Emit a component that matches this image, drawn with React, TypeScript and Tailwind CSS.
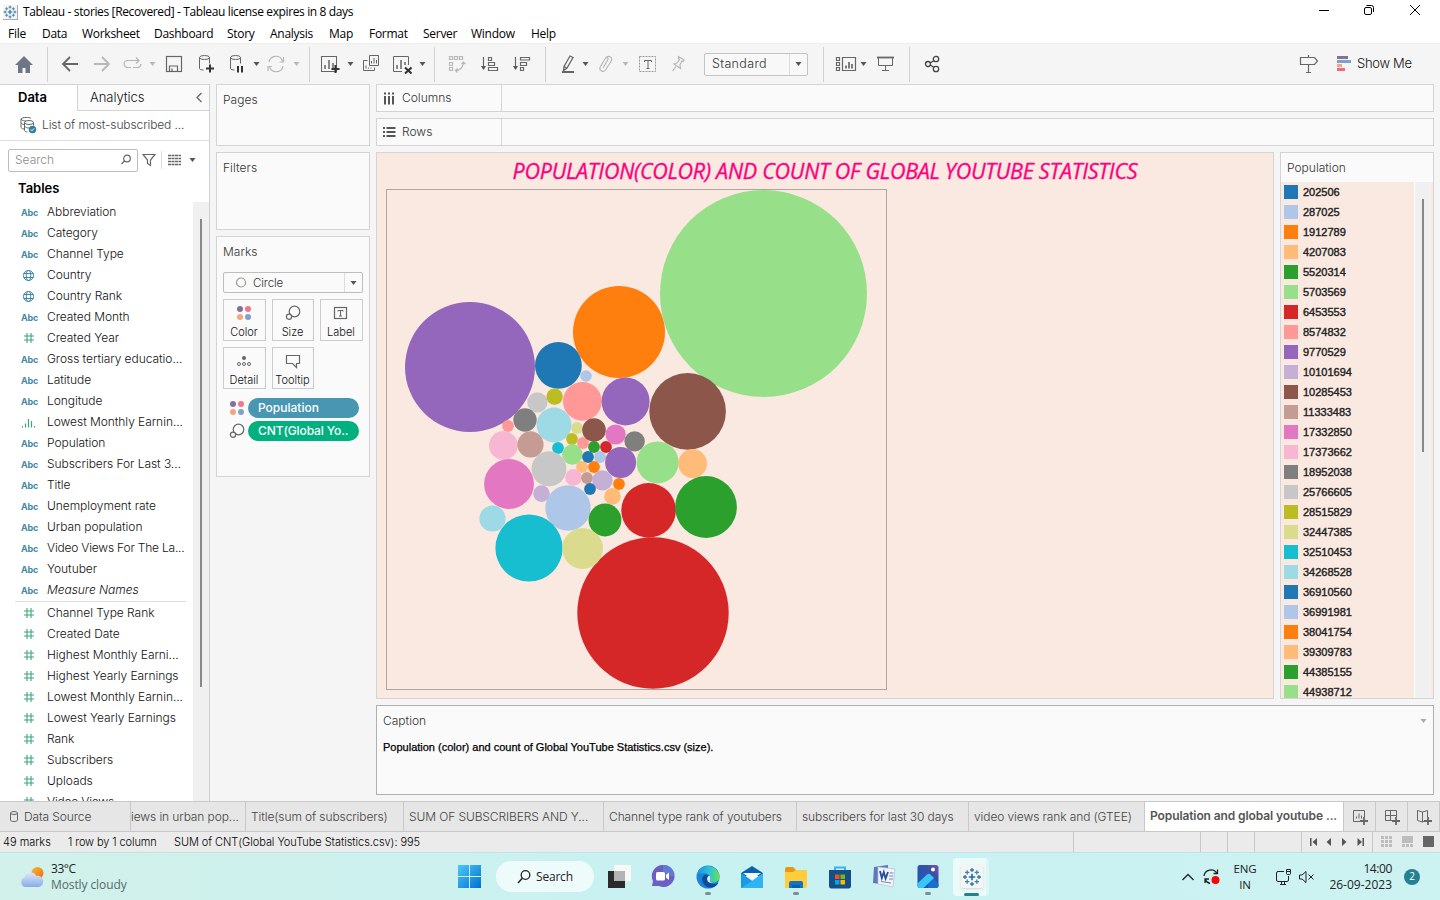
import React from 'react';

const TABLEAU = 'whitespace-nowrap font-[Inter,sans-serif]';
const SEGOE = "whitespace-nowrap font-['Open_Sans',sans-serif]";

type Kind = 'abc' | 'globe' | 'num' | 'bin';

const dimensions: [Kind, string][] = [
  ['abc', 'Abbreviation'],
  ['abc', 'Category'],
  ['abc', 'Channel Type'],
  ['globe', 'Country'],
  ['globe', 'Country Rank'],
  ['abc', 'Created Month'],
  ['num', 'Created Year'],
  ['abc', 'Gross tertiary educatio...'],
  ['abc', 'Latitude'],
  ['abc', 'Longitude'],
  ['bin', 'Lowest Monthly Earnin...'],
  ['abc', 'Population'],
  ['abc', 'Subscribers For Last 3...'],
  ['abc', 'Title'],
  ['abc', 'Unemployment rate'],
  ['abc', 'Urban population'],
  ['abc', 'Video Views For The La...'],
  ['abc', 'Youtuber'],
  ['abc', 'Measure Names'],
];

const measures = [
  'Channel Type Rank',
  'Created Date',
  'Highest Monthly Earni...',
  'Highest Yearly Earnings',
  'Lowest Monthly Earnin...',
  'Lowest Yearly Earnings',
  'Rank',
  'Subscribers',
  'Uploads',
  'Video Views',
];

const C = {
  blue: '#1f77b4', lblue: '#aec7e8', orange: '#ff7f0e', lorange: '#ffbb78',
  green: '#2ca02c', lgreen: '#98df8a', red: '#d62728', lred: '#ff9896',
  purple: '#9467bd', lpurple: '#c5b0d5', brown: '#8c564b', lbrown: '#c49c94',
  pink: '#e377c2', lpink: '#f7b6d2', grey: '#7f7f7f', lgrey: '#c7c7c7',
  olive: '#bcbd22', lolive: '#dbdb8d', cyan: '#17becf', lcyan: '#9edae5',
};

const legend: [string, string][] = [
  [C.blue, '202506'], [C.lblue, '287025'], [C.orange, '1912789'], [C.lorange, '4207083'],
  [C.green, '5520314'], [C.lgreen, '5703569'], [C.red, '6453553'], [C.lred, '8574832'],
  [C.purple, '9770529'], [C.lpurple, '10101694'], [C.brown, '10285453'], [C.lbrown, '11333483'],
  [C.pink, '17332850'], [C.lpink, '17373662'], [C.grey, '18952038'], [C.lgrey, '25766605'],
  [C.olive, '28515829'], [C.lolive, '32447385'], [C.cyan, '32510453'], [C.lcyan, '34268528'],
  [C.blue, '36910560'], [C.lblue, '36991981'], [C.orange, '38041754'], [C.lorange, '39309783'],
  [C.green, '44385155'], [C.lgreen, '44938712'],
];

const bubbles: [number, number, number, string][] = [
  [470, 367, 65, C.purple], [619, 332, 46, C.orange], [763.5, 293.5, 103.5, C.lgreen], [653, 613, 75.7, C.red],
  [558.4, 365.4, 23.4, C.blue], [586, 376, 5.8, C.lblue], [582.4, 401.4, 19.4, C.lred], [625.6, 401.4, 24, C.purple],
  [687.6, 411.4, 38.3, C.brown], [537.4, 402.4, 10.1, C.lgrey], [554.6, 396.6, 8.2, C.olive], [525, 420, 11.7, C.grey],
  [508, 426, 5.9, C.lred], [554, 425, 17.4, C.lcyan], [503.4, 445.4, 14.4, C.lpink], [530.5, 444.4, 13.1, C.lbrown],
  [558, 448, 5.9, C.cyan], [577, 428, 5.9, C.lolive], [572, 439, 5.9, C.olive], [583, 443, 5.9, C.lred],
  [594, 430, 11.8, C.brown], [594, 447, 5.9, C.green], [606, 447, 5.9, C.red], [615.6, 434.5, 10.1, C.pink],
  [634.6, 441.4, 10.2, C.grey], [572.4, 454.5, 10.2, C.lgreen], [588, 457, 5.9, C.blue], [600, 457, 5.9, C.lblue],
  [620.6, 462.5, 15.5, C.purple], [657.6, 462.4, 21, C.lgreen], [692.6, 463.6, 14.4, C.lorange], [549, 468.8, 17.5, C.lgrey],
  [582, 467, 5.9, C.lorange], [594, 467, 5.9, C.orange], [573.5, 477.4, 8.3, C.lpink], [587, 478, 5.9, C.lbrown],
  [602.4, 480.4, 10.2, C.lpurple], [619, 484, 5.9, C.orange], [590, 489, 5.9, C.blue], [612.5, 496.4, 8.3, C.lorange],
  [541.5, 493.6, 8.3, C.lpurple], [509, 484, 24.9, C.pink], [492.5, 518.5, 13.1, C.lcyan], [568, 508, 22.7, C.lblue],
  [605, 520, 16.4, C.green], [648.6, 510.4, 27.3, C.red], [706, 507, 30.9, C.green], [529, 548, 33.6, C.cyan],
  [582.6, 548.5, 20.4, C.lolive],
];

const Caret = ({ c = '#555', className = '' }: { c?: string; className?: string }) => (
  <svg width="7" height="4" viewBox="0 0 7 4" className={`shrink-0 ${className}`}><path d="M.5 0h6L3.5 4z" fill={c} /></svg>
);

const Ico = ({ w = 24, h = 24, c = '#666', children, className = '' }: { w?: number; h?: number; c?: string; children: React.ReactNode; className?: string }) => (
  <svg width={w} height={h} viewBox={`0 0 ${w} ${h}`} fill="none" stroke={c} className={`shrink-0 ${className}`}>{children}</svg>
);

function Snow({ size, className = '' }: { size: number; className?: string }) {
  const plus = (x: number, y: number, r: number, c: string, w: number) => (
    <path key={`${x}-${y}`} d={`M${x - r} ${y}h${2 * r}M${x} ${y - r}v${2 * r}`} stroke={c} strokeWidth={w} />
  );
  return (
    <svg width={size} height={size} viewBox="0 0 20 20" className={`shrink-0 ${className}`}>
      {plus(10, 10, 3.2, '#1f6f9f', 1.6)}
      {plus(10, 3, 2, '#2f78a6', 1.3)}
      {plus(10, 17, 2, '#2f78a6', 1.3)}
      {plus(3, 10, 2, '#2f78a6', 1.3)}
      {plus(17, 10, 2, '#2f78a6', 1.3)}
      {plus(5.2, 5.4, 2.2, '#3f83ab', 1.3)}
      {plus(14.8, 5.4, 2.2, '#3f83ab', 1.3)}
      {plus(5.2, 14.6, 2.2, '#3f83ab', 1.3)}
      {plus(14.8, 14.6, 2.2, '#3f83ab', 1.3)}
    </svg>
  );
}

function FieldIcon({ kind }: { kind: Kind }) {
  if (kind === 'abc') return <span className="w-[26px] font-[Inter,sans-serif] text-[9px] font-bold text-[#4588a4] tracking-[-0.25px] pt-[2px]">Abc</span>;
  if (kind === 'globe')
    return (
      <Ico w={26} h={14} c="#3d87a8">
        <circle cx="7.5" cy="7.5" r="5" /><ellipse cx="7.5" cy="7.5" rx="2.2" ry="5" /><path d="M2.5 5.5h10M2.5 9.5h10" />
      </Ico>
    );
  if (kind === 'num')
    return (
      <Ico w={26} h={14} c="#3fa57c"><path d="M6 2v10M10 2v10M3 5h10M3 9h10" strokeWidth="1.100" /></Ico>
    );
  return <Ico w={26} h={14} c="#3fa57c"><path d="M1.5 11v1.5M4.5 8.500v4M7.500 4v8.500M10.500 6v6.500M13.500 11v1.500" strokeWidth="1.2" /></Ico>;
}

function Field({ kind, label }: { kind: Kind; label: string }) {
  return (
    <div className="flex h-[21px] shrink-0 items-center pl-[21px]">
      <FieldIcon kind={kind} />
      <span className={`${TABLEAU} text-[12px] font-light text-[#111] ${label.startsWith('Video') ? 'tracking-[-0.2px]' : 'tracking-[-0.05px]'} ${label === 'Measure Names' ? 'italic' : ''}`}>{label}</span>
    </div>
  );
}

const Sep = () => <div className="h-[35px] w-px shrink-0 bg-[#d0d0d0]" />;

function TitleBar() {
  return (
    <div className="flex h-[22px] items-center bg-white">
      <div className="ml-[3px] mt-[2px] flex h-[15px] w-[15px] items-center justify-center border-r border-b border-[#aaa] bg-[#f4f4f4]"><Snow size={14} /></div>
      <span className={`${SEGOE} ml-[5px] mt-[2px] text-[12px] tracking-[-0.37px] text-black`}>Tableau - stories [Recovered] - Tableau license expires in 8 days</span>
      <div className="ml-auto flex items-center">
        <Ico w={12} h={12} c="#000"><path d="M1 5.500h10" /></Ico>
        <Ico w={12} h={12} c="#000" className="ml-[33px]"><rect x="1.500" y="2.500" width="7" height="7" rx="1.500" /><path d="M3.500 .5h5a2 2 0 0 1 2 2V7" /></Ico>
        <Ico w={12} h={12} c="#000" className="ml-[34px] mr-[19px]"><path d="M1 0l10 10M11 0L1 10" /></Ico>
      </div>
    </div>
  );
}

function MenuBar() {
  const m: [string, string][] = [
    ['File', 'w-[34px]'], ['Data', 'w-[40px]'], ['Worksheet', 'w-[72px]'], ['Dashboard', 'w-[73px]'], ['Story', 'w-[43px]'],
    ['Analysis', 'w-[59px]'], ['Map', 'w-[40px]'], ['Format', 'w-[54px]'], ['Server', 'w-[48px]'], ['Window', 'w-[60px]'], ['Help', 'w-[40px]'],
  ];
  return (
    <div className="flex h-[21px] items-center bg-white pl-2">
      {m.map(([t, w]) => <span key={t} className={`${SEGOE} ${w} mt-[2px] shrink-0 text-[12px] tracking-[-0.28px] text-black`}>{t}</span>)}
    </div>
  );
}

function Toolbar() {
  const lt = '#b8b8b8';
  return (
    <div className="flex h-[41px] shrink-0 items-center border-t border-[#eee] bg-[#f5f5f5]">
      <Ico w={20} h={20} className="ml-[14px]"><path d="M10 2L1 11h3v8h4.500v-5h3v5H16v-8h3z" fill="#6d7886" stroke="none" /></Ico>
      <div className="ml-[13px]"><Sep /></div>
      <Ico w={18} h={18} className="ml-[13px]"><path d="M17 9H2M9 2L2 9l7 7" strokeWidth="1.800" /></Ico>
      <Ico w={18} h={18} c={lt} className="ml-[14px]"><path d="M1 9h15M9 2l7 7-7 7" strokeWidth="1.800" /></Ico>
      <Ico w={20} h={14} c={lt} className="ml-[12px]"><path d="M8 10.500H5a4 3.500 0 0 1 0-7h11M13 .5l3 3-3 3M10 10.500h4.500a3.500 3.500 0 0 0 3.500-3.500" strokeWidth="1.200" /></Ico>
      <Caret c={lt} className="ml-[6px]" />
      <Ico w={18} h={18} className="ml-[9px]"><rect x="1.500" y="1.500" width="15" height="15" strokeWidth="1.200" /><path d="M4.500 16v-5h8v5M7 16v-2.500" strokeWidth="1.200" /></Ico>
      <Ico w={18} h={20} className="ml-[14px]"><ellipse cx="7.500" cy="3.500" rx="5" ry="2" /><path d="M2.500 3.500v11c0 1 2 1.500 4 1.500M12.500 3.500v6" /><path d="M13 10.500v8M9 14.500h8" stroke="#333" strokeWidth="2" /></Ico>
      <Ico w={18} h={20} className="ml-[13px]"><ellipse cx="7.500" cy="3.500" rx="5" ry="2" /><path d="M2.500 3.500v11c0 1 2 1.500 4 1.500M12.500 3.500v6" /><path d="M10 12v6.500M14 12v6.500" stroke="#333" strokeWidth="2" /></Ico>
      <Caret className="ml-[7px]" />
      <Ico w={18} h={18} c={lt} className="ml-[7px]"><path d="M2 7a7 7 0 0 1 13.500-1M16 11a7 7 0 0 1-13.500 1M16.500 2v5h-4M1 16v-4.500h4" strokeWidth="1.200" /></Ico>
      <Caret c={lt} className="ml-[8px]" />
      <div className="ml-[9px]"><Sep /></div>
      <Ico w={20} h={20} className="ml-[10px]"><rect x="1.500" y="2.500" width="15" height="15" /><path d="M5 15v-4M9 15V6M13 15V9" strokeWidth="1.500" /><path d="M15.500 11v8M11.500 15h8" stroke="#333" strokeWidth="2" /></Ico>
      <Caret className="ml-[7px]" />
      <Ico w={18} h={18} className="ml-[8px]"><path d="M7.500 .5h9v10h-9zM5.500 5.500h-4v10H12.500V12.500M9.500 8.500V6M12 8.500V3M14.500 8.500V5M4 13.500v-3M6.500 13.500v-1M9 13.500v-1" /></Ico>
      <Ico w={20} h={20} className="ml-[12px]"><path d="M10 17.500H1.500v-15h15V11" /><path d="M5 15v-4M9 15V6M13 11V8" strokeWidth="1.500" /><path d="M13 13.500l6.500 6M19.500 13.500l-6.500 6" stroke="#333" strokeWidth="2" /></Ico>
      <Caret className="ml-[7px]" />
      <div className="ml-[8px]"><Sep /></div>
      <Ico w={18} h={18} c={lt} className="ml-[13px]"><path d="M1.500 1.500h3v3h-3zM6.500 1.500h3v3h-3zM11.500 1.500h3v3h-3zM1.500 7.500h3v3h-3zM1.500 12.500h3v3h-3zM15.500 7a8 8 0 0 1-8 8.500M13.500 9l2-2 2 2M9.500 13.500l-2 2 2 2" strokeWidth="1.200" /></Ico>
      <Ico w={20} h={18} className="ml-[14px]"><path d="M3.500 2v12M8.500 2.500h3v3h-3zM8.500 7.500h6v3h-6zM8.500 12.500h9v3h-9z" strokeWidth="1.200" /><path d="M1 11h5l-2.500 4z" fill="#555" stroke="none" /></Ico>
      <Ico w={20} h={18} className="ml-[12px]"><path d="M3.500 2v12M8.500 2.500h9v2.500h-9zM8.500 7.500h6v3h-6zM8.500 12.500h3v3h-3z" strokeWidth="1.200" /><path d="M1 11h5l-2.500 4z" fill="#555" stroke="none" /></Ico>
      <div className="ml-[13px]"><Sep /></div>
      <Ico w={16} h={20} className="ml-[14px]"><path d="M4 12.500l6-10.500 3 1.500-6 10.500-3.500 2.500zM4 12.500l3 1.500" strokeWidth="1.300" /><path d="M2 18h12" strokeWidth="2" /></Ico>
      <Caret className="ml-[6px]" />
      <Ico w={16} h={18} c={lt} className="ml-[9px]"><path d="M5 13l5-8.500a1.500 1.500 0 0 0-2.500-1.500l-5 8.500a3 3 0 0 0 5 3.500L13 6.500a3 3 0 0 0-5-4" strokeWidth="1.200" /></Ico>
      <Caret c={lt} className="ml-[8px]" />
      <Ico w={18} h={18} className="ml-[10px]"><rect x=".5" y="1.500" width="16" height="15" strokeDasharray="2 1" stroke="#999" /><path d="M5.500 7V5.500h7V7M9 5.500v8M7.500 13.500h3" /></Ico>
      <Ico w={16} h={18} c={lt} className="ml-[13px]"><path d="M8.500 1.500l5.500 3.500-1 1.500-1-.5-2 3.500.5 4-6.500-4.500 3-1 2.500-3.500-1-1zM6 11.500L2.500 16" strokeWidth="1.200" /></Ico>
      <div className="ml-[18px] flex h-[23px] w-[104px] shrink-0 items-center rounded-[2px] border border-[#c4c4c4] bg-[#f8f8f8]">
        <span className={`${TABLEAU} flex-1 pl-[7px] text-[12.5px] font-light tracking-[0.35px] text-[#333]`}>Standard</span>
        <div className="flex h-full w-[18px] items-center justify-center border-l border-[#ddd]"><Caret /></div>
      </div>
      <div className="ml-[15px]"><Sep /></div>
      <Ico w={22} h={18} className="ml-[11px]"><path d="M1.500 2.500h3v3h-3zM1.500 7.500h3v3h-3zM1.500 12.500h3v3h-3zM7.500 2.500h13v13h-13z" strokeWidth="1.200" /><path d="M11 13.500v-3M14 13.500V7M17 13.500V9" strokeWidth="1.700" /></Ico>
      <Caret className="ml-[3px]" />
      <Ico w={20} h={18} className="ml-[9px]"><path d="M2.500 2.500v8h14v-8M9.500 10.500v5M6 15.500h7" /><path d="M1 2.500h17" strokeWidth="1.800" /></Ico>
      <div className="ml-[13px]"><Sep /></div>
      <Ico w={18} h={18} c="#444" className="ml-[14px]"><circle cx="4" cy="9" r="2.500" strokeWidth="1.300" /><circle cx="12" cy="4" r="2.700" strokeWidth="1.300" /><circle cx="12" cy="14" r="2.700" strokeWidth="1.300" /><path d="M6.200 8l3.800-2.500M6.200 10l3.800 2.500" strokeWidth="1.300" /></Ico>
      <div className="ml-auto flex items-center">
        <Ico w={20} h={20}><path d="M1.500 3.500h14l3 3.500-3 3.500h-14zM9.500 1v2.500M9.500 10.500v8M7 18.500h5" strokeWidth="1.200" /></Ico>
        <svg width="15" height="16" viewBox="0 0 15 16" className="ml-[18px]"><path d="M0 0h11v3H0z" fill="#84719b" /><path d="M0 4h14v3H0z" fill="#7ea1cc" /><path d="M0 8h5v3H0z" fill="#f4a582" /><path d="M0 12h8v3H0z" fill="#f2697f" /></svg>
        <span className={`${TABLEAU} ml-[5px] w-[83px] text-[13px] font-light tracking-[-0.3px] text-[#111]`}>Show Me</span>
      </div>
    </div>
  );
}

function DataPane() {
  return (
    <div className="flex w-[210px] shrink-0 flex-col overflow-hidden border-r border-[#cfcfcf] bg-white">
      <div className="flex h-[27px] shrink-0 border-t border-[#d4d4d4]">
        <div className={`${TABLEAU} w-[77px] pl-[18px] pt-[3px] text-[13px] font-semibold text-black`}>Data</div>
        <div className={`${TABLEAU} flex flex-1 items-center border-b border-l border-[#d4d4d4] bg-[#fafafa] pl-[12px] text-[13px] font-light tracking-[-0.05px] text-[#111]`}>
          Analytics
          <Ico w={8} h={12} className="ml-auto mr-[6px]"><path d="M6.500 1L2 5.500 6.500 10" strokeWidth="1.300" /></Ico>
        </div>
      </div>
      <div className="flex h-[30px] shrink-0 items-center border-b border-[#ddd] pb-px pl-[19px]">
        <Ico w={18} h={18}>
          <path d="M12 2.500c-1-1.500-9-1.500-10 .5v8c0 1 1 2 3 2M2 3c1 2 4 2 5 2M2 7c1 1 2 1.500 3 1.500" /><ellipse cx="10" cy="6.500" rx="4.500" ry="2" /><path d="M5.500 6.500v7.500c0 1 1 2 3 2M14.500 6.500v3M6 10.500c1 1 2 1.500 4 1.500" />
          <circle cx="13.500" cy="13.500" r="3.700" fill="#2f7f9f" stroke="none" /><path d="M11.800 13.500l1.200 1.300 2.200-2.500" stroke="#fff" />
        </Ico>
        <span className={`${TABLEAU} ml-[5px] text-[12px] font-light tracking-[-0.12px] text-[#444]`}>List of most-subscribed ...</span>
      </div>
      <div className="mt-[7px] flex h-[24px] shrink-0 items-center pl-[8px]">
        <div className={`${TABLEAU} flex h-[23px] w-[130px] items-center justify-between rounded-[2px] border border-[#bdbdbd] pl-[6px] pr-[5px] text-[12px] font-light text-[#8c8c8c]`}>
          Search
          <Ico w={12} h={12}><circle cx="7" cy="4.500" r="3.300" strokeWidth="1.200" /><path d="M4.500 7L1.500 10" strokeWidth="1.300" /></Ico>
        </div>
        <Ico w={14} h={14} className="ml-[4px]"><path d="M1 1.500h12L8.500 7v5.500l-3-2V7z" strokeWidth="1.200" /></Ico>
        <div className="ml-[5px] h-[18px] w-px bg-[#ddd]" />
        <Ico w={14} h={12} className="ml-[6px]"><path d="M0 1.500h13M0 4.500h13M0 7.500h13M0 10.500h13" strokeDasharray="3 .5" strokeWidth="1.300" /></Ico>
        <Caret className="ml-[7px]" />
      </div>
      <div className={`${TABLEAU} flex h-[29px] shrink-0 items-center pl-[18px] pt-[4px] text-[13px] font-semibold text-black`}>Tables</div>
      <div className="flex min-h-0 flex-1">
        <div className="flex w-[193px] shrink-0 flex-col overflow-hidden">
          {dimensions.map(([k, l]) => <Field key={l} kind={k} label={l} />)}
          <div className="ml-[15px] h-[2px] w-[171px] shrink-0 border-b border-[#ddd]" />
          {measures.map((l) => <Field key={l} kind="num" label={l} />)}
        </div>
        <div className="mt-px flex flex-1 justify-center bg-[#f0f0f0]"><div className="mt-[17px] h-[468px] w-[2px] bg-[#888]" /></div>
      </div>
    </div>
  );
}

const ColorDots = () => (
  <svg width="16" height="16" viewBox="0 0 16 16" className="shrink-0"><circle cx="4" cy="4" r="3" fill="#84719b" /><circle cx="12" cy="4" r="3" fill="#f2768a" /><circle cx="4" cy="12" r="3" fill="#f4a582" /><circle cx="12" cy="12" r="3" fill="#7ea1cc" /></svg>
);
const SizeIcon = () => (
  <Ico w={16} h={16}><circle cx="9.500" cy="6.500" r="5.300" strokeWidth="1.200" /><circle cx="4" cy="11.800" r="2.600" fill="#fafafa" strokeWidth="1.200" /></Ico>
);

function MarkButton({ label, children }: { label: string; children: React.ReactNode }) {
  return (
    <div className="flex h-[42px] flex-col items-center border border-[#ccc] pr-px pt-[5px]">
      {children}
      <span className={`${TABLEAU} mt-[4px] text-[11px] font-light leading-[14px] tracking-normal text-[#111]`}>{label}</span>
    </div>
  );
}

function Shelf({ children, className }: { children: React.ReactNode; className: string }) {
  return <div className={`${TABLEAU} shrink-0 border border-[#d4d4d4] bg-[#fafafa] pl-[6px] pt-[6px] text-[12px] font-light tracking-[0.05px] text-[#333] ${className}`}>{children}</div>;
}

function MarksColumn() {
  return (
    <div className="ml-[6px] flex w-[154px] shrink-0 flex-col">
      <Shelf className="h-[62px]">Pages</Shelf>
      <Shelf className="mt-[6px] h-[78px]">Filters</Shelf>
      <Shelf className="mt-[6px] h-[241px]">
        Marks
        <div className="mt-[11px] flex h-[21px] w-[140px] items-center rounded-[2px] border border-[#bdbdbd]">
          <Ico w={12} h={12} c="#999" className="ml-[11px]"><circle cx="6" cy="5.500" r="4.500" strokeWidth="1.200" /></Ico>
          <span className="ml-[6px] pt-[2px] text-[11.5px] tracking-[-0.1px]">Circle</span>
          <div className="ml-auto flex h-full w-[18px] items-center justify-center border-l border-[#ddd]"><Caret /></div>
        </div>
        <div className="mt-[6px] grid w-[141px] grid-cols-[43px_42px_43px] gap-x-[6px] gap-y-[6px]">
          <MarkButton label="Color"><ColorDots /></MarkButton>
          <MarkButton label="Size"><SizeIcon /></MarkButton>
          <MarkButton label="Label"><Ico w={16} h={16}><rect x="1.500" y="2.500" width="12" height="11" strokeWidth="1.200" /><path d="M5 6.500V5.500h5v1M7.500 5.500v5.500M6 11h3" /></Ico></MarkButton>
          <MarkButton label="Detail"><Ico w={16} h={16}><circle cx="8" cy="5" r="2" fill="#666" stroke="none" /><circle cx="3" cy="11" r="1.500" /><circle cx="8" cy="11" r="1.500" /><circle cx="13" cy="11" r="1.500" /></Ico></MarkButton>
          <MarkButton label="Tooltip"><Ico w={16} h={16}><path d="M1.500 2.500h13v8h-3v4l-4-4h-6z" strokeWidth="1.200" /></Ico></MarkButton>
        </div>
        <div className="mt-[9px] flex items-center pl-[6px]">
          <ColorDots />
          <div className="ml-[3px] flex h-[20px] w-[111px] items-center rounded-full bg-[#4996b2] pl-[10px] text-[12px] font-medium tracking-normal text-white">Population</div>
        </div>
        <div className="mt-[3px] flex items-center pl-[6px]">
          <SizeIcon />
          <div className="ml-[3px] flex h-[20px] w-[111px] items-center rounded-full bg-[#00b180] pl-[10px] text-[12px] font-medium tracking-[-0.1px] text-white">CNT(Global Yo..</div>
        </div>
      </Shelf>
    </div>
  );
}

function AxisShelf({ label, children }: { label: string; children: React.ReactNode }) {
  return (
    <div className="flex h-[28px] shrink-0 border border-[#d4d4d4] bg-[#fafafa]">
      <div className={`${TABLEAU} flex w-[125px] items-center gap-[6px] border-r border-[#d4d4d4] pl-[6px] text-[12px] font-light text-[#333]`}>
        {children}
        {label}
      </div>
    </div>
  );
}

function Worksheet() {
  return (
    <div className="ml-[6px] flex w-[1058px] shrink-0 flex-col">
      <AxisShelf label="Columns"><Ico w={13} h={13} c="#555"><path d="M2 4v8.500M6 4v8.500M10 4v8.500" strokeWidth="2" /><path d="M2 .5v2M6 .5v2M10 .5v2" strokeWidth="2" /></Ico></AxisShelf>
      <div className="h-[6px] shrink-0" />
      <AxisShelf label="Rows"><Ico w={13} h={13} c="#555"><path d="M3.500 2h9M3.500 6h9M3.500 10h9" strokeWidth="1.800" /><path d="M0 2h2M0 6h2M0 10h2" strokeWidth="1.800" /></Ico></AxisShelf>
      <div className="mt-[6px] flex h-[547px] shrink-0 justify-between">
        <div className="flex w-[898px] flex-col border border-[#d4d4d4] bg-[#fae9e0]">
          <div className="flex h-[36px] items-center justify-center whitespace-nowrap pt-px font-['Open_Sans',sans-serif] text-[21.5px] italic tracking-[-0.25px] text-[#ff0080] [-webkit-text-stroke:0.35px_#ff0080]">
            POPULATION(COLOR) AND COUNT OF GLOBAL YOUTUBE STATISTICS
          </div>
          <svg width="501" height="501" viewBox="386 189 501 501" className="ml-[9px] shrink-0">
            <rect x="386.500" y="189.500" width="500" height="500" fill="none" stroke="#aaa6a4" />
            {bubbles.map(([x, y, r, c], i) => <circle key={i} cx={x} cy={y} r={r} fill={c} />)}
          </svg>
        </div>
        <div className="flex w-[154px] flex-col overflow-hidden border border-[#d4d4d4] bg-[#fae9e0]">
          <div className={`${TABLEAU} flex h-[29px] shrink-0 items-center bg-[#fafafa] pl-[6px] text-[12px] font-light text-[#333]`}>Population</div>
          <div className="flex min-h-0 flex-1 pr-[2px]">
            <div className="flex min-h-0 flex-1 flex-col overflow-hidden">
              {legend.map(([c, l]) => (
                <div key={l} className="flex h-[20px] shrink-0 items-center pl-[3px]">
                  <svg width="14" height="14" viewBox="0 0 14 14"><rect width="14" height="14" fill={c} /></svg>
                  <span className="ml-[5px] font-['Liberation_Sans',sans-serif] text-[11px] text-[#222] [-webkit-text-stroke:0.4px_#222]">{l}</span>
                </div>
              ))}
            </div>
            <div className="flex w-[17px] justify-center border-l border-white bg-[#f0f0f0]"><div className="mt-[17px] h-[253px] w-[2px] bg-[#888]" /></div>
          </div>
        </div>
      </div>
      <div className="mt-[6px] flex h-[90px] shrink-0 flex-col border border-[#b0b0b0] bg-[#fafafa] px-[6px]">
        <div className={`${TABLEAU} flex h-[29px] items-center justify-between text-[12px] font-light text-[#333]`}>Caption<Caret c="#aaa" /></div>
        <div className="mt-[5px] whitespace-nowrap font-['Liberation_Sans',sans-serif] text-[11px] leading-[15px] text-black [-webkit-text-stroke:0.25px_black]">Population (color) and count of Global YouTube Statistics.csv (size).</div>
      </div>
    </div>
  );
}

function SheetTabs() {
  const tabs: [string, string][] = [
    ['Title(sum of subscribers)', 'w-[158px]'],
    ['SUM OF SUBSCRIBERS AND Y...', 'w-[200px]'],
    ['Channel type rank of youtubers', 'w-[193px]'],
    ['subscribers for last 30 days', 'w-[172px]'],
    ['video views rank and (GTEE)', 'w-[176px]'],
  ];
  const cell = `${TABLEAU} flex shrink-0 items-center overflow-hidden border-r border-[#c8c8c8] text-[12px] font-light tracking-[-0.1px] text-[#444]`;
  return (
    <div className="flex h-[31px] shrink-0 border-y border-[#c8c8c8] bg-[#e6e6e6]">
      <div className={`${cell} w-[131px] pl-[9px]`}>
        <Ico w={10} h={14}><ellipse cx="5" cy="3" rx="3.500" ry="1.500" /><path d="M1.500 3v7c0 2 7 2 7 0V3" /></Ico>
        <span className="ml-[5px]">Data Source</span>
      </div>
      <div className={`${cell} w-[115px]`}><span>iews in urban pop...</span></div>
      {tabs.map(([t, w]) => <div key={t} className={`${cell} ${w} pl-[5px]`}>{t}</div>)}
      <div className={`${TABLEAU} flex w-[199px] shrink-0 items-center border-r border-[#c8c8c8] bg-white pb-[2px] pl-[5px] text-[12px] font-semibold tracking-[-0.1px] text-[#555]`}>Population and global youtube ...</div>
      <div className="flex w-[32px] items-center justify-center border-r border-[#c8c8c8]"><Ico w={16} h={16}><path d="M9 12.500H1.500v-11h11V8M4.500 9.500v-2M7 9.500v-5M9.500 9.500v-3" /><path d="M12 8v8M8 12h8" strokeWidth="1.800" /></Ico></div>
      <div className="flex w-[32px] items-center justify-center border-r border-[#c8c8c8]"><Ico w={16} h={16}><path d="M8 11.500H1.500v-10h11V8M1.500 6.500h11M6.500 1.500v10" /><path d="M12 8v8M8 12h8" strokeWidth="1.800" /></Ico></div>
      <div className="flex w-[32px] items-center justify-center border-r border-[#c8c8c8]"><Ico w={16} h={16}><path d="M6.500 3L1.500 1.500v10L6.500 13l2-1M6.500 3l5-1.500V8M6.500 3v10" /><path d="M12 8v8M8 12h8" strokeWidth="1.800" /></Ico></div>
    </div>
  );
}

function StatusBar() {
  return (
    <div className={`${TABLEAU} flex h-[20px] shrink-0 items-center bg-[#ebebeb] text-[11px] font-light text-[#000]`}>
      <span className="w-[65px] shrink-0 pl-[3px]">49 marks</span>
      <span className="w-[106px] shrink-0 pl-[3px] tracking-[-0.1px]">1 row by 1 column</span>
      <span className="pl-[3px] tracking-[-0.05px]">SUM of CNT(Global YouTube Statistics.csv): 995</span>
      <div className="ml-auto flex h-full">
        <div className="w-[127px] border-l border-[#c8c8c8]" />
        <div className="w-[27px] border-l border-[#c8c8c8]" />
        <div className="w-[27px] border-l border-[#c8c8c8]" />
        <div className="w-[47px] border-l border-[#c8c8c8]" />
        <div className="flex w-[71px] items-center border-l border-[#c8c8c8] pb-px pl-[8px]">
          <svg width="56" height="10" viewBox="0 0 56 10" fill="#555"><path d="M0 1h1.500v8H0zM7 1v8L2.500 5zM21 1v8l-4.500-4zM32 1v8l4.500-4zM47.500 1v8L52 5zM52.500 1H54v8h-1.500z" /></svg>
        </div>
        <div className="flex w-[68px] items-center border-l border-[#c8c8c8] pb-px pl-[8px]">
          <svg width="54" height="12" viewBox="0 0 54 12" fill="#bdbdbd"><path d="M0 0h3v3H0zM4 0h3v3H4zM8 0h3v3H8zM0 4h3v3H0zM4 4h3v3H4zM8 4h3v3H8zM0 8h3v3H0zM4 8h3v3H4zM8 8h3v3H8zM21 0h11v7H21zM21 8h3v3h-3zM25 8h3v3h-3zM29 8h3v3h-3z" /><path d="M42 0h11v11H42z" fill="#666" /></svg>
        </div>
      </div>
    </div>
  );
}

function AppIcon({ children, running }: { children: React.ReactNode; running?: boolean }) {
  return (
    <div className="relative flex h-full w-[41px] shrink-0 items-center justify-center">
      <svg width="24" height="24" viewBox="0 0 24 24">{children}</svg>
      {running && <div className="absolute bottom-[5px] h-[3px] w-[6px] rounded-full bg-[#7d8f92]" />}
    </div>
  );
}

function Taskbar() {
  return (
    <div className="flex h-[48px] shrink-0 items-center border-t border-[#bde5e6] bg-linear-to-r from-[#d2f1ea] via-[#c8f1f2] to-[#cdf2f2]">
      <svg width="26" height="22" viewBox="0 0 26 22" className="ml-[19px] shrink-0">
        <defs>
          <linearGradient id="sun" x1="0" y1="0" x2="1" y2="1"><stop stopColor="#f7b733" /><stop offset="1" stopColor="#ef6c0c" /></linearGradient>
          <linearGradient id="cloud" x1="0" y1="0" x2="0" y2="1"><stop stopColor="#dce8fb" /><stop offset="1" stopColor="#87abe8" /></linearGradient>
        </defs>
        <circle cx="18.500" cy="7" r="6" fill="url(#sun)" />
        <path d="M6 21a5 5 0 0 1-.5-9.500 6.500 6.500 0 0 1 12-1.500A5.500 5.500 0 0 1 20 21z" fill="url(#cloud)" />
      </svg>
      <div className={`${SEGOE} ml-[6px] w-[397px] shrink-0 text-[12px] leading-[16px] text-[#222]`}>
        <div className="tracking-[-0.45px]">33°C</div>
        <div className="tracking-[-0.1px] text-[#556a6c]">Mostly cloudy</div>
      </div>
      <AppIcon>
        <defs><linearGradient id="win" x1="0" y1="0" x2="1" y2="1"><stop stopColor="#4cc9fb" /><stop offset="1" stopColor="#0070cf" /></linearGradient></defs>
        <path d="M1 0h11v11H1zM13 0h11v11H13zM1 12h11v11H1zM13 12h11v11H13z" fill="url(#win)" />
      </AppIcon>
      <div className={`${SEGOE} ml-[7px] flex h-[31px] w-[98px] shrink-0 items-center rounded-full bg-[#eefbfb] pl-[20px] text-[12px] tracking-[-0.2px] text-[#222]`}>
        <Ico w={16} h={16} c="#222"><circle cx="9.500" cy="6" r="4.300" strokeWidth="1.300" /><path d="M6.500 9L2 14" strokeWidth="1.500" /></Ico>
        <span className="ml-[4px]">Search</span>
      </div>
      <div className="w-[4px] shrink-0" />
      <AppIcon><path d="M7 0h17v16H7z" fill="#f8f8f8" /><path d="M1 6h17v17H1z" fill="#2b2b2b" /><path d="M7 6h11v10H7z" fill="#b4b4b4" /></AppIcon>
      <div className="w-[3px]" />
      <AppIcon>
        <path d="M12 0a11 11 0 1 1-4 21H1l1-5A11 11 0 0 1 12 0z" fill="#6b5fc4" /><path d="M12 0a11 11 0 0 1 11 11H12z" fill="#5c8ce0" opacity=".6" />
        <rect x="5" y="7" width="9" height="8.500" rx="1.500" fill="#fff" /><path d="M15 10l3-2.500v7.500l-3-2.500z" fill="#fff" />
      </AppIcon>
      <div className="w-[4px]" />
      <AppIcon running>
        <defs>
          <linearGradient id="edge" x1="0" y1=".3" x2="1" y2=".3"><stop stopColor="#1b8fdc" /><stop offset=".55" stopColor="#2cc4d8" /><stop offset="1" stopColor="#6be04b" /></linearGradient>
        </defs>
        <circle cx="12" cy="12" r="11.500" fill="#1b83d6" />
        <path d="M.8 10A11.500 11.500 0 0 1 23.500 11.500c0 4-3 6-6.500 6-2.500 0-4-1-3-2.500 1.500-2 0-6-4.500-6.500C5.500 8 2 9 .8 10z" fill="url(#edge)" />
        <path d="M9.500 9.500c-4 1.500-4.500 7-1 10.500 3 3 7.500 3.500 11 1 1.500-1 2.500-2.200 3-3.500-3.500 2.500-10 2-11-2.500-.4-1.800.2-3 .8-3.800-.6-1.200-1.500-1.900-2.800-1.700z" fill="#11489a" />
        <path d="M11.500 15.500c-1-2 .2-4.500 2-4.700 1 1.200 1.200 3 .5 4.200-.6 1 .2 2.500 3 2.500-2.500.6-4.800 0-5.500-2z" fill="#d8f1f2" />
      </AppIcon>
      <div className="w-[3px]" />
      <AppIcon>
        <path d="M1 8l11-7 11 7v3H1z" fill="#0a62ae" /><path d="M1 8l11 8L23 8v15H1z" fill="#2fb3f1" /><path d="M12 16L1 23V8z" fill="#1b9ae4" /><path d="M3 8h18l-9 7z" fill="#f3f7fb" />
      </AppIcon>
      <div className="w-[3px]" />
      <AppIcon running>
        <path d="M1 4a2 2 0 0 1 2-2h6l3 3h9a2 2 0 0 1 2 2v6H1z" fill="#e69a0c" /><path d="M1 7h8l3-2h11v16a2 2 0 0 1-2 2H1z" fill="#ffcc3e" /><path d="M5 23v-5a2 2 0 0 1 2-2h10a2 2 0 0 1 2 2v5z" fill="#1474c4" /><path d="M8 20h8v3H8z" fill="#0f5ba4" />
      </AppIcon>
      <div className="w-[3px]" />
      <AppIcon>
        <path d="M7 6V2.500h10V6" fill="none" stroke="#37b6ee" strokeWidth="2" /><path d="M1 5h22v16a2.500 2.500 0 0 1-2.500 2.500h-17A2.500 2.500 0 0 1 1 21z" fill="#154f86" />
        <path d="M7 9.500h4.500V14H7z" fill="#f25022" /><path d="M12.500 9.500H17V14h-4.500z" fill="#7fba00" /><path d="M7 15h4.500v4.500H7z" fill="#00a4ef" /><path d="M12.500 15H17v4.500h-4.500z" fill="#ffb900" />
      </AppIcon>
      <div className="w-[3px]" />
      <AppIcon>
        <path d="M2 2l14-2v20L1 18z" fill="#5c79bb" /><path d="M6 2l17 2-2 18-15-3z" fill="#f0f3f9" stroke="#b7c2d8" strokeWidth=".7" />
        <path d="M8 6l1.800 7 2-6 1.800 6.500L16 7" fill="none" stroke="#234a9c" strokeWidth="1.800" /><path d="M9 16.500l10 1.500M17.500 8h4M17.200 11h4M17 14h4" stroke="#6f87bd" strokeWidth="1" />
      </AppIcon>
      <div className="w-[3px]" />
      <AppIcon running>
        <defs><linearGradient id="ph" x1="0" y1="1" x2="1" y2="0"><stop stopColor="#1559b5" /><stop offset=".7" stopColor="#3a4fa8" /><stop offset="1" stopColor="#8d4fa0" /></linearGradient></defs>
        <rect x="1.500" y="0" width="21" height="23" rx="2.500" fill="url(#ph)" /><path d="M13 10c.6-.4 1.400-.2 2 .5l7.500 8.500v1.500c0 1.500-1 2.500-2.500 2.500h-8z" fill="#1a6fcb" /><path d="M1.500 18.500l9.500-9c1.200-1 2.500-1 3.700.2l3.300 3.300L7.500 23H4c-1.500 0-2.500-1-2.500-2.500z" fill="#38c6f8" /><circle cx="17" cy="4.500" r="2" fill="#fff" />
      </AppIcon>
      <div className="relative ml-[5px] flex h-[38px] w-[36px] shrink-0 items-center justify-center rounded-[4px] border-r-[3px] border-[#dcf6f6] bg-[#ecfafa]">
        <div className="ml-[4px] flex h-[23px] w-[22px] items-center justify-center bg-[#f4f4f2] shadow"><Snow size={20} /></div>
        <div className="absolute bottom-0 left-[11px] h-[3px] w-[15px] rounded-full bg-[#25808f]" />
      </div>
      <div className="ml-auto flex items-center">
        <Ico w={14} h={10} c="#222"><path d="M1.500 8L7 2.500 12.500 8" strokeWidth="1.300" /></Ico>
        <Ico w={20} h={20} c="#222" className="ml-[7px]"><path d="M2 9a7 7 0 0 1 13-2.500M15.500 2.500v4h-4M3 16v-4h4M3 12a7 7 0 0 0 5 4.500" strokeWidth="1.300" /><circle cx="13.500" cy="13" r="4" fill="#fb0007" stroke="none" /></Ico>
        <div className={`${SEGOE} ml-[9px] w-[28px] text-center text-[11.5px] leading-[16px] tracking-[-0.1px] text-[#222]`}>ENG<br />IN</div>
        <Ico w={18} h={18} c="#222" className="ml-[15px]"><path d="M10 3.500H4A1.500 1.500 0 0 0 2.500 5v7A1.500 1.500 0 0 0 4 13.500h9a1.500 1.500 0 0 0 1.500-1.500V8M6 16.500h6M7.500 13.500v3M10.500 13.500v3M12.500 1.500h4v4a1 1 0 0 1-1 1h-2a1 1 0 0 1-1-1zM12.500 3.500h4" /></Ico>
        <Ico w={18} h={16} c="#222" className="ml-[6px]"><path d="M1.500 6v4h2.500l4 3.500v-11L4 6zM10.500 5.500l5 5M15.500 5.500l-5 5" /></Ico>
        <div className={`${SEGOE} ml-[10px] w-[66px] text-right text-[12px] leading-[16px] text-[#222]`}><div className="tracking-[-0.4px]">14:00</div>26-09-2023</div>
        <div className={`${SEGOE} ml-[12px] mr-[20px] flex h-[16px] w-[16px] items-center justify-center rounded-full bg-[#25808f] text-[10px] text-white`}>2</div>
      </div>
    </div>
  );
}

export default function App() {
  return (
    <div className="flex h-[900px] w-[1440px] flex-col overflow-hidden bg-[#f5f5f5]">
      <TitleBar />
      <MenuBar />
      <Toolbar />
      <div className="flex h-[717px] shrink-0">
        <DataPane />
        <MarksColumn />
        <Worksheet />
      </div>
      <SheetTabs />
      <StatusBar />
      <Taskbar />
    </div>
  );
}
